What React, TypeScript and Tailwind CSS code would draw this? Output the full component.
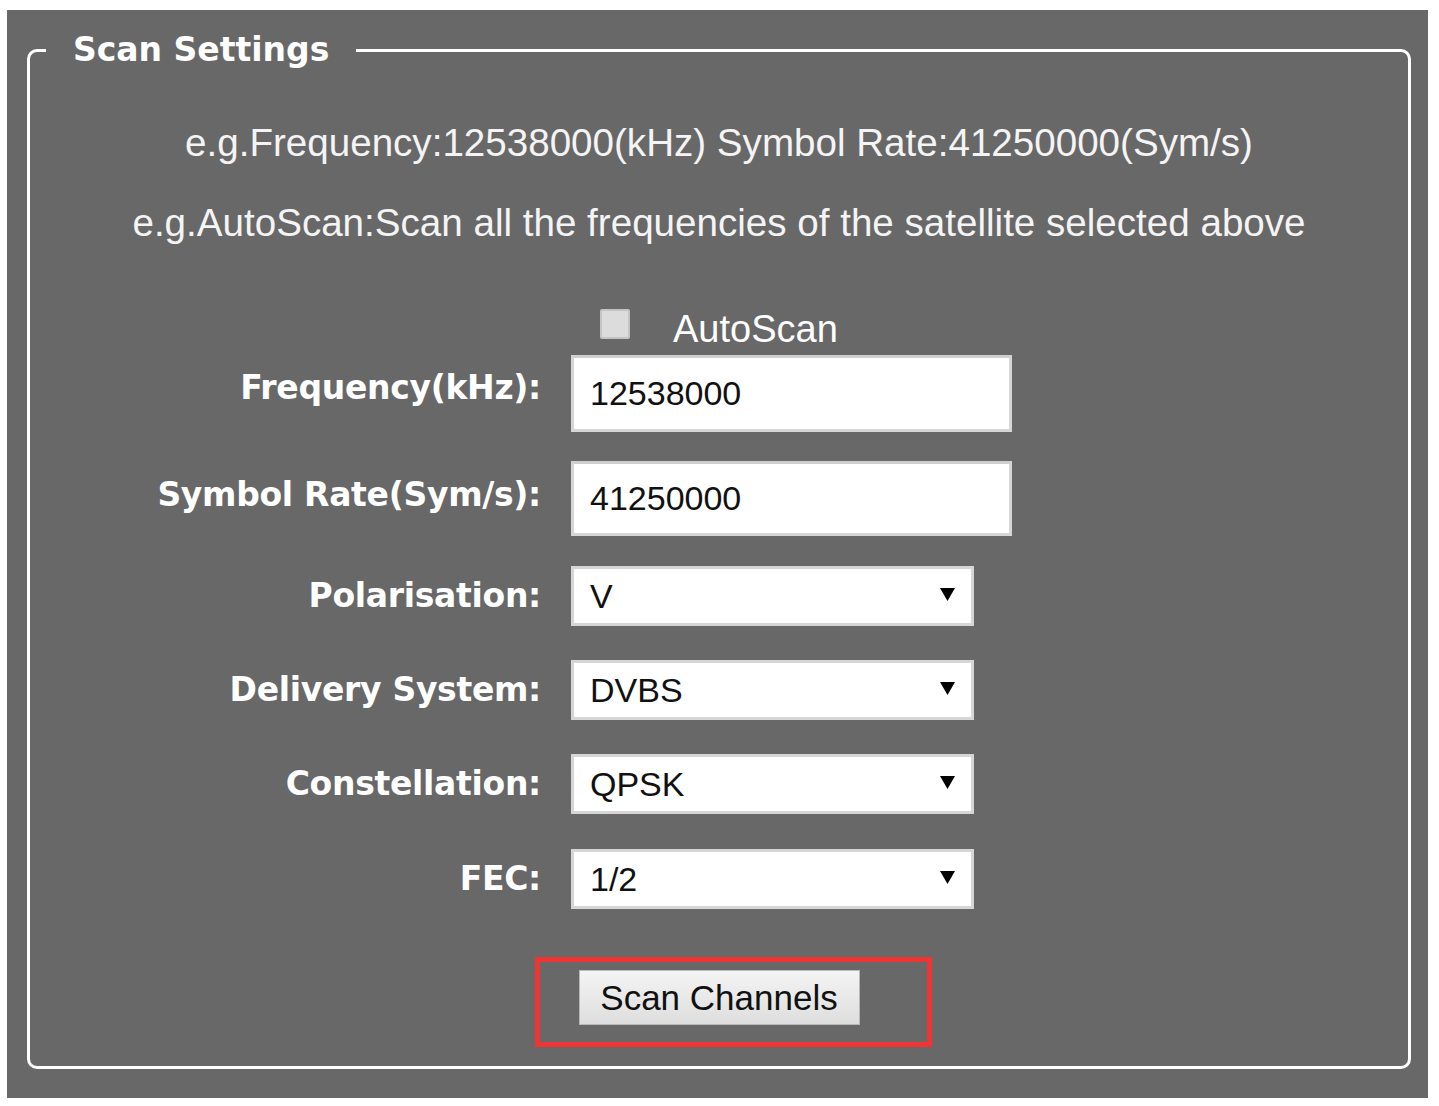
import React from "react";

const arial = { fontFamily: '"Liberation Sans", Arial, sans-serif' };

function Label({ children }: { children: React.ReactNode }) {
  return (
    <div className="w-[511px] shrink-0 text-right font-['DejaVu_Sans',Verdana,sans-serif] font-bold text-[33px] leading-[40px] text-white tracking-[-0.3px]">
      {children}
    </div>
  );
}

function TextRow({ label, value, h, mt, lift }: { label: string; value: string; h: string; mt: string; lift: string }) {
  return (
    <div className={`flex items-center ${mt}`}>
      <div className={lift}>
        <Label>{label}</Label>
      </div>
      <div className="ml-[30px]">
        <input
          type="text"
          defaultValue={value}
          className={`block w-[441px] ${h} bg-white border-[3px] border-[#d6d6d6] border-t-[#cfcfcf] pl-[16px] text-[34px] text-[#111] font-['Liberation_Sans',Arial,sans-serif] outline-none`}
        />
      </div>
    </div>
  );
}

function SelectRow({ label, value, mt }: { label: string; value: string; mt: string }) {
  return (
    <div className={`flex items-center ${mt}`}>
      <Label>{label}</Label>
      <div className="ml-[30px] flex h-[60px] w-[403px] items-center justify-between bg-white border-[3px] border-[#d6d6d6] pl-[16px] pr-[15px]">
        <span className="text-[34px] leading-[40px] text-[#111] font-['Liberation_Sans',Arial,sans-serif]">{value}</span>
        <svg width="17" height="15" viewBox="0 0 17 15" className="mt-[-4px]">
          <path d="M1 1 H16 L8.5 14 Z" fill="#000" />
        </svg>
      </div>
    </div>
  );
}

export default function App() {
  return (
    <div className="min-h-[1106px] w-[1439px] bg-white pt-[10px]" style={arial}>
      <div className="ml-[7px] w-[1421px] h-[1088px] bg-[#686868] pt-[21px]">
        <fieldset className="ml-[20px] w-[1384px] h-[1038px] border-[3px] border-white rounded-[10px] p-0 m-0">
          <legend className="ml-[16px] px-[27px] font-['DejaVu_Sans',Verdana,sans-serif] font-bold text-[33px] leading-[38px] text-white">
            Scan Settings
          </legend>
          <div className="mt-[54px] text-center text-[38.6px] leading-[40px] text-[#f4f4f4] font-['Liberation_Sans',Arial,sans-serif]">
            e.g.Frequency:12538000(kHz) Symbol Rate:41250000(Sym/s)
          </div>
          <div className="mt-[40px] text-center text-[38.6px] leading-[40px] text-[#f4f4f4] font-['Liberation_Sans',Arial,sans-serif]">
            e.g.AutoScan:Scan all the frequencies of the satellite selected above
          </div>

          <div className="mt-[64px] flex h-[40px] items-center">
            <div className="w-[511px] shrink-0" />
            <div className="ml-[59px] mt-[-6px] h-[30px] w-[30px] rounded-[2px] border-[2px] border-[#c4c4c4] bg-[#dcdcdc]" />
            <span className="ml-[43px] mt-[4px] text-[38px] leading-[40px] text-white font-['Liberation_Sans',Arial,sans-serif]">
              AutoScan
            </span>
          </div>

          <TextRow label="Frequency(kHz):" value="12538000" h="h-[77px]" mt="mt-[8px]" lift="mb-[12px]" />
          <TextRow label="Symbol Rate(Sym/s):" value="41250000" h="h-[75px]" mt="mt-[29px]" lift="mb-[8px]" />
          <SelectRow label="Polarisation:" value="V" mt="mt-[30px]" />
          <SelectRow label="Delivery System:" value="DVBS" mt="mt-[34px]" />
          <SelectRow label="Constellation:" value="QPSK" mt="mt-[34px]" />
          <SelectRow label="FEC:" value="1/2" mt="mt-[35px]" />

          <div className="mt-[61px] flex justify-center">
            <div className="relative">
              <button
                type="button"
                className="block h-[55px] w-[281px] border border-[#b8b8b8] bg-gradient-to-b from-[#f4f4f4] to-[#dedede] text-[35px] leading-[40px] text-[#111] font-['Liberation_Sans',Arial,sans-serif]"
              >
                Scan Channels
              </button>
              <div className="pointer-events-none absolute left-[-44px] top-[-13px] h-[90px] w-[397px] border-[5px] border-[#f03434]" />
            </div>
          </div>
        </fieldset>
      </div>
    </div>
  );
}
